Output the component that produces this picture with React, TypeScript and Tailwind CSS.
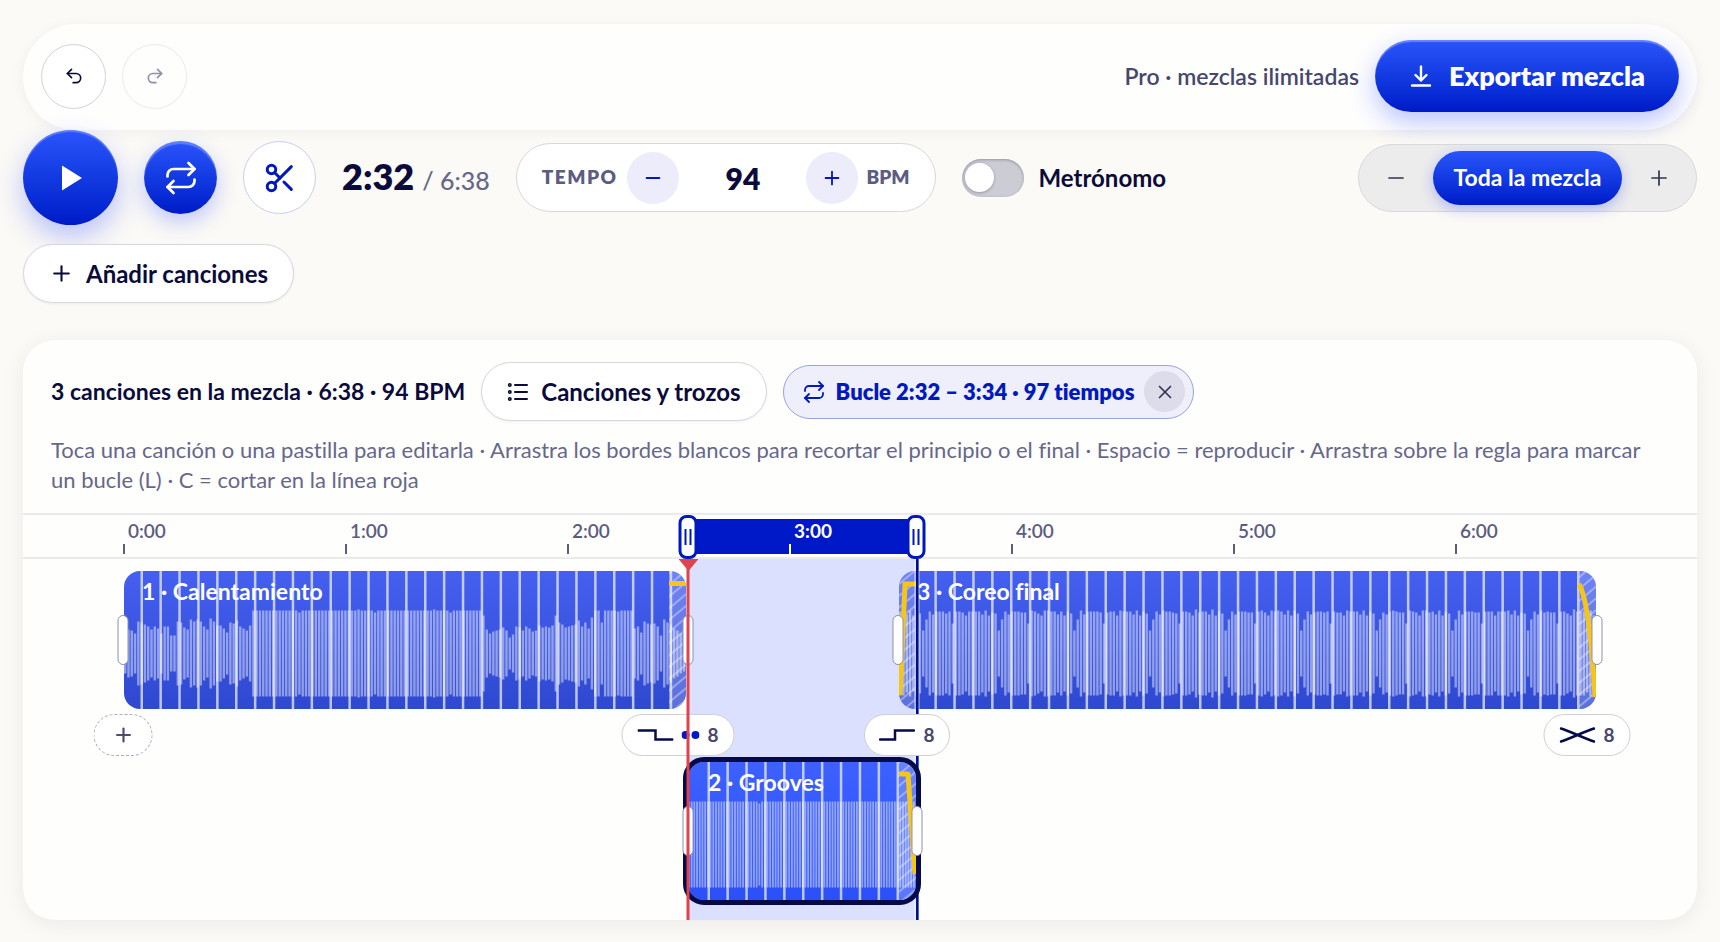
import { useState } from 'react';
import { Minus, Plus, Redo2, Repeat, Scissors, Undo2, X } from 'lucide-react';

const PX_PER_SECOND = 3.7;
const ORIGIN = 101;
const PHRASE = 18.9;

interface Clip {
  id: string;
  title: string;
  left: number;
  width: number;
  bars: number[];
  barStep: number;
  firstLine: number;
}

const WARMUP_INTRO = [
  20, 24, 23, 20, 32, 31, 29, 27, 24, 27, 25, 20, 27, 27, 18, 18, 32, 31, 26, 24, 34, 32, 34, 32, 27, 24,
  35, 32, 28, 28, 25, 21, 31, 30, 33, 27, 25, 23, 28,
];
const WARMUP_BREAK = [
  38, 24, 20, 22, 23, 24, 26, 23, 16, 19, 27, 26, 23, 27, 25, 22, 23, 28, 26, 27, 26, 28, 38, 31, 29, 26,
  27, 28, 29, 33, 27, 31, 25, 36, 43, 43, 31, 43, 43, 43, 43, 42, 43, 43, 43, 43, 25, 27, 21, 32, 30, 29, 30, 27,
  18, 34, 31, 29, 25, 23, 20, 18,
];
const FINALE_LOOP = [23, 34, 42, 39, 42, 42, 42, 41, 41, 30, 42, 42, 41, 38, 43, 42, 42, 42, 39, 43, 38, 42, 40];

const warmupBars = [
  ...WARMUP_INTRO,
  ...Array.from({ length: 70 }, (_, i) => (i === 14 || i === 37 || i === 60 ? 41 : i === 32 || i === 55 ? 44 : 43)),
  ...WARMUP_BREAK,
];

// Two dips every 23 bars, with a little jitter in between
const finaleBars = Array.from({ length: 212 }, (_, i) => {
  const base = FINALE_LOOP[(i + 16) % 23];
  return base > 40 ? base + ((i * 7) % 5 === 0 ? 1 : 0) - ((i * 11) % 7 === 0 ? 1 : 0) : base;
});

const groovesBars = Array.from({ length: 84 }, (_, i) => (i === 26 ? 41 : 43));

const clips: Record<'warmup' | 'grooves' | 'finale', Clip> = {
  warmup: { id: 'warmup', title: '1 · Calentamiento', left: 101, width: 562, bars: warmupBars, barStep: 3.287, firstLine: 17 },
  grooves: { id: 'grooves', title: '2 · Grooves', left: 665, width: 228, bars: groovesBars, barStep: 2.71, firstLine: 20 },
  finale: { id: 'finale', title: '3 · Coreo final', left: 876, width: 697, bars: finaleBars, barStep: 3.287, firstLine: 17 },
};

function ClipCanvas({ clip, fadeIn, fadeOut }: { clip: Clip; fadeIn?: string; fadeOut?: string }) {
  const lines: number[] = [];
  for (let x = clip.firstLine; x < clip.width - 4; x += PHRASE) lines.push(x);
  const hatch = `hatch-${clip.id}`;

  return (
    <svg className="absolute inset-0 h-full w-full" viewBox={`0 0 ${clip.width} 138`} preserveAspectRatio="none" aria-hidden="true">
      <defs>
        <pattern id={hatch} width="9" height="9" patternUnits="userSpaceOnUse" patternTransform="rotate(-40)">
          <rect width="9" height="9" fill="#ffffff" fillOpacity="0.22" />
          <rect width="9" height="2" fill="#ffffff" fillOpacity="0.35" />
        </pattern>
      </defs>
      {clip.bars.map((half, i) => (
        <rect key={i} x={i * clip.barStep} y={82.5 - half} width={clip.barStep - 0.9} height={half * 2} fill="#ffffff" fillOpacity="0.46" />
      ))}
      {lines.map((x) => (
        <rect key={x} x={x - 0.5} y="0" width="2.5" height="138" fill="#ffffff" fillOpacity="0.68" />
      ))}
      {fadeIn && <rect x="0" y="0" width="16" height="138" fill={`url(#${hatch})`} />}
      {fadeOut && <rect x={clip.width - 17} y="0" width="17" height="138" fill={`url(#${hatch})`} />}
      {fadeIn && <path d={fadeIn} fill="none" stroke="#f5c518" strokeWidth="5" />}
      {fadeOut && (
        <path d={fadeOut} transform={`translate(${clip.width - 17} 0)`} fill="none" stroke="#f5c518" strokeWidth="5" strokeLinejoin="round" />
      )}
    </svg>
  );
}

function TrimHandle({ x, y, label }: { x: number; y: number; label: string }) {
  return (
    <button
      type="button"
      aria-label={label}
      className="absolute h-[50px] w-[11px] -translate-x-1/2 cursor-ew-resize rounded-md border border-[#8d8fae] bg-white"
      style={{ left: x, top: y }}
    />
  );
}

function LoopHandle({ x, label }: { x: number; label: string }) {
  return (
    <button
      type="button"
      aria-label={label}
      className="absolute top-0 z-40 flex h-11 w-[19px] -translate-x-1/2 cursor-ew-resize items-center justify-center gap-[3px] rounded-lg border-3 border-[#0019bd] bg-white"
      style={{ left: x }}
    >
      <span className="h-4 w-0.5 bg-[#0019bd]" />
      <span className="h-4 w-0.5 bg-[#0019bd]" />
    </button>
  );
}

function TransitionChip({ x, width, label, children }: { x: number; width: number; label: string; children: React.ReactNode }) {
  return (
    <button
      type="button"
      aria-label={label}
      className="absolute top-[155px] z-20 flex h-[42px] -translate-x-1/2 items-center justify-center gap-2 rounded-full border border-[#cfcfd6] bg-white text-[19px] font-bold text-[#47476b]"
      style={{ left: x, width }}
    >
      {children}
    </button>
  );
}

function DownloadIcon() {
  return (
    <svg width="24" height="24" viewBox="0 0 24 24" fill="none" stroke="currentColor" strokeWidth="2.4" strokeLinecap="round" strokeLinejoin="round">
      <path d="M12 2.500v14M6.500 11l5.500 5.500 5.500-5.500M3 21.500h18" />
    </svg>
  );
}

function ListIcon() {
  return (
    <svg width="22" height="22" viewBox="0 0 22 22" fill="none" stroke="currentColor" strokeWidth="2" strokeLinecap="round">
      <path d="M8 4h12M8 11h12M8 18h12" />
      <circle cx="2.800" cy="4" r="1.200" strokeWidth="1.600" />
      <circle cx="2.800" cy="11" r="1.200" strokeWidth="1.600" />
      <circle cx="2.800" cy="18" r="1.200" strokeWidth="1.600" />
    </svg>
  );
}

export default function App() {
  const [tempo, setTempo] = useState(94);
  const [metronome, setMetronome] = useState(false);
  const [loop, setLoop] = useState(true);

  const marks = ['0:00', '1:00', '2:00', '3:00', '4:00', '5:00', '6:00'];
  const loopStart = 665;
  const loopEnd = 893;

  return (
    <div className="min-h-screen bg-[#fbfaf6] px-[23px] pt-6 pb-[23px] font-['Lato',sans-serif] text-[#0a0b3b] [font-variant-ligatures:none]">
      <header className="flex items-center justify-between rounded-full bg-[#fefefd] px-[18px] pt-4 pb-[18px] shadow-[0_2px_14px_rgba(20,20,60,0.05)]">
        <div className="flex gap-4">
          <button type="button" aria-label="Deshacer" className="flex size-[65px] items-center justify-center rounded-full border border-[#d3d3dc] bg-white">
            <Undo2 size={20} strokeWidth={2} />
          </button>
          <button type="button" aria-label="Rehacer" disabled className="flex size-[65px] items-center justify-center rounded-full border border-[#d3d3dc] bg-white opacity-45">
            <Redo2 size={20} strokeWidth={2} />
          </button>
        </div>
        <div className="flex items-center gap-4">
          <span className="text-[23px] font-semibold text-[#47476b]">Pro · mezclas ilimitadas</span>
          <button
            type="button"
            className="flex h-[72px] items-center gap-4 rounded-full bg-linear-to-b from-[#2a54fc] to-[#0019c8] px-[34px] text-[27px] font-extrabold text-white shadow-[0_10px_26px_rgba(30,60,255,0.3),inset_0_2px_1px_rgba(255,255,255,0.3)]"
          >
            <DownloadIcon />
            Exportar mezcla
          </button>
        </div>
      </header>

      <div className="flex flex-wrap items-center gap-x-[26px] gap-y-[19px]">
        <button
          type="button"
          aria-label="Reproducir"
          className="flex size-[95px] items-center justify-center rounded-full bg-linear-to-b from-[#2a54fc] to-[#0019c8] text-white shadow-[0_12px_28px_rgba(30,60,255,0.3),inset_0_2px_1px_rgba(255,255,255,0.25)]"
        >
          <svg width="26" height="26" viewBox="0 0 26 26" fill="currentColor">
            <path d="M4 0.500 24 13 4 25.500z" />
          </svg>
        </button>
        <button
          type="button"
          aria-label="Bucle"
          aria-pressed={loop}
          onClick={() => setLoop(!loop)}
          className="flex size-[73px] items-center justify-center rounded-full bg-linear-to-b from-[#2a54fc] to-[#0019c8] text-white shadow-[0_8px_22px_rgba(30,60,255,0.28),inset_0_3px_1px_rgba(255,255,255,0.25)]"
        >
          <Repeat size={36} strokeWidth={1.8} />
        </button>
        <button type="button" aria-label="Cortar" className="flex size-[73px] items-center justify-center rounded-full border-[1.5px] border-[#c9cdf3] bg-white text-[#0019bd]">
          <Scissors size={34} strokeWidth={2.1} />
        </button>
        <p className="flex items-baseline gap-2 text-[25px] font-medium text-[#67678a]">
          <span className="text-4xl font-extrabold text-[#0a0b3b]">2:32</span>
          <span>/ 6:38</span>
        </p>
        <div className="flex h-[69px] items-center rounded-full border border-[#d6d6de] bg-white px-[25px] text-[19px] font-extrabold text-[#5c5c82]">
          <label htmlFor="tempo" className="tracking-[1.5px]">TEMPO</label>
          <button type="button" aria-label="Bajar tempo" onClick={() => setTempo(tempo - 1)} className="ml-2.5 flex size-[52px] items-center justify-center rounded-full bg-[#ececfb] text-[#0019bd]">
            <Minus size={22} strokeWidth={2} />
          </button>
          <input
            id="tempo"
            value={tempo}
            onChange={(e) => setTempo(Number(e.target.value) || 0)}
            className="w-[127px] bg-transparent text-center text-3xl font-extrabold text-[#0a0b3b] outline-none"
          />
          <button type="button" aria-label="Subir tempo" onClick={() => setTempo(tempo + 1)} className="mr-2 flex size-[52px] items-center justify-center rounded-full bg-[#ececfb] text-[#0019bd]">
            <Plus size={22} strokeWidth={2} />
          </button>
          BPM
        </div>
        <label className="flex items-center gap-[15px] text-[24px] font-bold">
          <input type="checkbox" role="switch" checked={metronome} onChange={(e) => setMetronome(e.target.checked)} className="peer sr-only" />
          <span className="flex h-[38px] w-[62px] items-center rounded-full bg-[#ccccd4] px-[3px] shadow-[inset_0_1px_3px_rgba(20,20,60,0.3)] peer-checked:justify-end peer-checked:bg-[#0019bd]">
            <span className="size-[29px] rounded-full bg-white shadow-[0_1px_3px_rgba(20,20,60,0.3)]" />
          </span>
          Metrónomo
        </label>
        <div className="ml-auto flex h-[68px] items-center rounded-full border border-[#d9d9dc] bg-[#ececec] text-[#33334f]">
          <button type="button" aria-label="Alejar" className="flex h-full w-[74px] items-center justify-center">
            <Minus size={24} strokeWidth={1.7} />
          </button>
          <button type="button" className="h-[54px] w-[189px] rounded-full bg-linear-to-b from-[#2a54fc] to-[#0019c8] text-[23px] font-bold text-white shadow-[0_4px_14px_rgba(30,60,255,0.3)]">
            Toda la mezcla
          </button>
          <button type="button" aria-label="Acercar" className="flex h-full w-[74px] items-center justify-center">
            <Plus size={24} strokeWidth={1.7} />
          </button>
        </div>
        <button type="button" className="flex h-[59px] items-center gap-3 rounded-full border border-[#d6d6de] bg-white px-[25px] text-[24px] font-bold shadow-[0_1px_3px_rgba(20,20,60,0.06)]">
          <Plus size={25} strokeWidth={2} />
          Añadir canciones
        </button>
      </div>

      <main className="mt-[37px] rounded-[32px] bg-[#fefefd] shadow-[0_4px_22px_rgba(20,20,60,0.07)]">
        <div className="px-7 pt-[22px] pb-[18px]">
          <div className="flex flex-wrap items-center gap-4">
            <h1 className="text-[23px] font-bold">3 canciones en la mezcla · 6:38 · 94 BPM</h1>
            <button type="button" className="flex h-[59px] items-center gap-3 rounded-full border border-[#d6d6de] bg-white px-[25px] text-[24px] font-bold shadow-[0_1px_3px_rgba(20,20,60,0.06)]">
              <ListIcon />
              Canciones y trozos
            </button>
            <div className="flex h-[54px] items-center gap-2.5 rounded-full border border-[#98a2e4] bg-[#eeeffb] pr-2 pl-[18px] text-[22px] font-extrabold text-[#0019bd]">
              <Repeat size={24} strokeWidth={1.8} />
              Bucle 2:32 – 3:34 · 97 tiempos
              <button type="button" aria-label="Quitar bucle" onClick={() => setLoop(false)} className="flex size-[41px] items-center justify-center rounded-full bg-[#dcdcea] text-[#33334f]">
                <X size={22} strokeWidth={1.8} />
              </button>
            </div>
          </div>
          <p className="mt-3.5 text-[22px] leading-[30px] text-[#67678a]">
            Toca una canción o una pastilla para editarla · Arrastra los bordes blancos para recortar el principio o el final · Espacio = reproducir · Arrastra sobre la regla para marcar un bucle (L) · C = cortar en la línea roja
          </p>
        </div>

        <div className="relative">
          {/* Ruler */}
          <div className="relative h-[46px] border-y-2 border-[#ebebed]">
            <div className="absolute top-1 h-[35px] bg-[#0019c8]" style={{ left: loopStart, width: loopEnd - loopStart }} />
            {marks.map((mark, i) => (
              <div
                key={mark}
                className={i === 3 ? 'absolute top-0 h-full text-[19px] font-bold text-white' : 'absolute top-0 h-full text-[19px] font-semibold text-[#5c5c82]'}
                style={{ left: ORIGIN + i * 60 * PX_PER_SECOND }}
              >
                <span className="block pt-1 pl-1 leading-6">{mark}</span>
                <span className="absolute top-[29px] left-0 h-2.5 w-0.5 -translate-x-1/2 bg-current" />
              </div>
            ))}
            <LoopHandle x={loopStart} label="Inicio del bucle" />
            <LoopHandle x={loopEnd} label="Fin del bucle" />
          </div>

          {/* Tracks */}
          <div className="relative h-[361px]">
            <div className="absolute top-0 bottom-0 bg-[#dbe0ff]" style={{ left: loopStart, width: loopEnd - loopStart }} />

            <section className="absolute top-3 h-[138px] overflow-hidden rounded-2xl bg-linear-to-b from-[#4560f0] to-[#2e48d0]" style={{ left: clips.warmup.left, width: clips.warmup.width }}>
              <ClipCanvas clip={clips.warmup} fadeOut="M0 12.500h17" />
              <h2 className="relative pt-1 pl-[18px] text-[23px] leading-8 font-bold text-white">{clips.warmup.title}</h2>
            </section>

            <section className="absolute top-3 h-[138px] overflow-hidden rounded-2xl bg-linear-to-b from-[#4560f0] to-[#2e48d0]" style={{ left: clips.finale.left, width: clips.finale.width }}>
              <ClipCanvas clip={clips.finale} fadeIn="M1 124 6 13h11" fadeOut="M0 13C10 30 14 90 16 126" />
              <h2 className="relative pt-1 pl-[18px] text-[23px] leading-8 font-bold text-white">{clips.finale.title}</h2>
            </section>

            <div className="absolute top-0 bottom-0 z-10 w-[5px] -translate-x-1/2 border-x border-white/70 bg-[#00108c] bg-clip-padding" style={{ left: loopEnd + 0.5 }} />

            <section
              className="absolute top-[203px] z-10 h-[138px] overflow-hidden rounded-2xl bg-linear-to-b from-[#3d60ff] to-[#2c50f8] outline-5 outline-[#040b48]"
              style={{ left: clips.grooves.left, width: clips.grooves.width }}
            >
              <ClipCanvas clip={clips.grooves} fadeOut="M0 12h9L16 112" />
              <h2 className="relative pt-1 pl-5 text-[23px] leading-8 font-bold text-white">{clips.grooves.title}</h2>
            </section>

            <div className="absolute inset-0 z-10">
              <TrimHandle x={100} y={56} label="Recortar inicio de Calentamiento" />
              <TrimHandle x={665} y={56} label="Recortar final de Calentamiento" />
              <TrimHandle x={875} y={56} label="Recortar inicio de Coreo final" />
              <TrimHandle x={1574} y={56} label="Recortar final de Coreo final" />
              <TrimHandle x={665} y={247} label="Recortar inicio de Grooves" />
              <TrimHandle x={894} y={247} label="Recortar final de Grooves" />
            </div>

            <button
              type="button"
              aria-label="Añadir entrada"
              className="absolute top-[155px] z-20 flex h-[42px] w-[59px] -translate-x-1/2 items-center justify-center rounded-full border-[1.5px] border-dashed border-[#a9a9b8] bg-white text-[#4c4c74]"
              style={{ left: 100 }}
            >
              <Plus size={22} strokeWidth={2.4} />
            </button>
            <TransitionChip x={655} width={113} label="Corte, 8 tiempos">
              <svg width="36" height="14" viewBox="0 0 36 14" fill="none" stroke="#040b48" strokeWidth="2.500">
                <path d="M1 2.500h17v9h17" strokeLinecap="round" />
              </svg>
              <svg width="18" height="8" viewBox="0 0 18 8" fill="#0019c8">
                <circle cx="4" cy="4" r="4" />
                <circle cx="14" cy="4" r="4" />
              </svg>
              8
            </TransitionChip>
            <TransitionChip x={884} width={86} label="Entrada, 8 tiempos">
              <svg width="36" height="14" viewBox="0 0 36 14" fill="none" stroke="#040b48" strokeWidth="2.500">
                <path d="M1 11.500h15v-9h19" strokeLinecap="round" />
              </svg>
              8
            </TransitionChip>
            <TransitionChip x={1564} width={87} label="Fundido, 8 tiempos">
              <svg width="36" height="16" viewBox="0 0 36 16" fill="none" stroke="#040b48" strokeWidth="2.500" strokeLinecap="round">
                <path d="M1.500 1.500C12 5 24 11 34.500 14.500M1.500 14.500C12 11 24 5 34.500 1.500" />
              </svg>
              8
            </TransitionChip>

            {/* Playhead */}
            <div className="absolute top-0 bottom-0 z-30 w-[3px] -translate-x-1/2 bg-[#e0434b]" style={{ left: loopStart }}>
              <svg width="20" height="12" viewBox="0 0 20 12" className="absolute top-0 left-1/2 max-w-none -translate-x-1/2" fill="#e0434b">
                <path d="M0 0h20L10 12z" />
              </svg>
            </div>
          </div>
        </div>
      </main>
    </div>
  );
}
